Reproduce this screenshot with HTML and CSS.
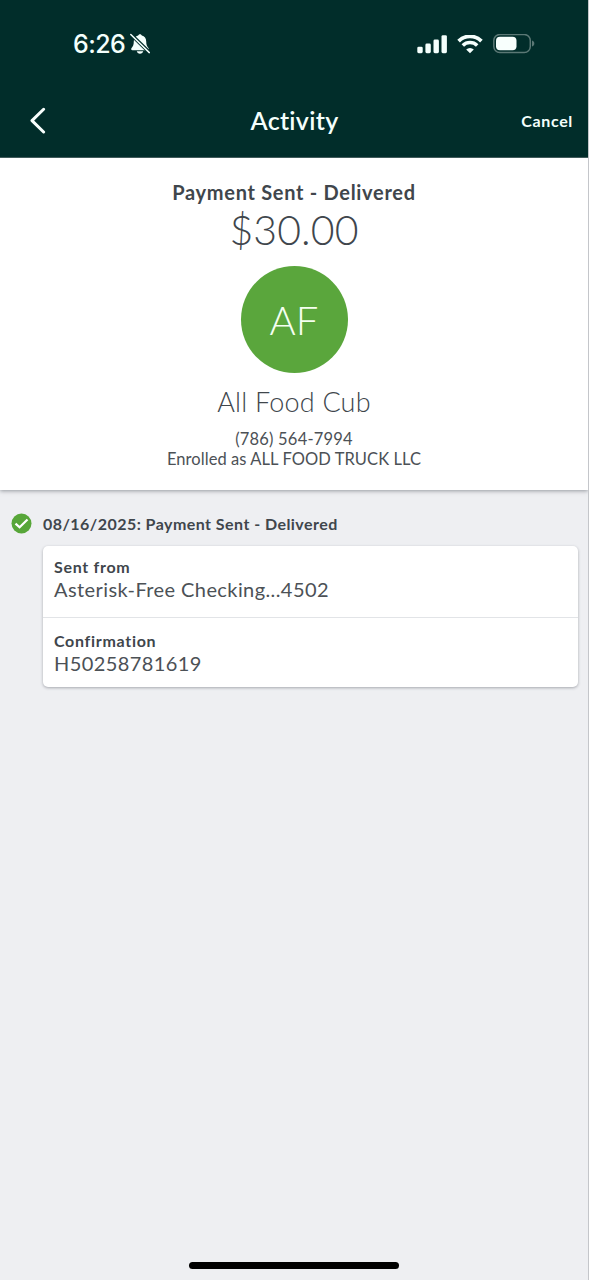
FILE: index.html
```html
<!DOCTYPE html>
<html lang="en">
<head>
<meta charset="utf-8">
<title>Activity</title>
<link rel="stylesheet" href="styles.css">
</head>
<body>
<div class="screen">
  <header class="header">
    <div class="status">
      <div class="status-left">
        <span class="time">6:26</span>
        <svg class="bell" width="22" height="22" viewBox="0 0 22 22">
          <path d="M11 1.200c.9 0 1.600.6 1.800 1.400 2.800.8 4.400 2.900 4.400 5.600 0 3.800.9 5.200 2.200 6.800.9 1 .4 2.300-.9 2.300H3.500c-1.300 0-1.800-1.300-.9-2.300C3.900 13.400 4.800 12 4.800 8.200c0-2.700 1.600-4.800 4.400-5.600.2-.8.9-1.400 1.800-1.400z" fill="#f4fffc"/>
          <path d="M7.800 18.300h6.400c-.3 1.500-1.600 2.500-3.200 2.500s-2.900-1-3.200-2.500z" fill="#f4fffc"/>
          <path d="M2 1.500L20.500 19.500" stroke="#012d2a" stroke-width="3.800"/>
          <path d="M1.800 1.500L20.300 19.600" stroke="#f4fffc" stroke-width="1.500" stroke-linecap="round"/>
        </svg>
      </div>
      <div class="status-right">
        <svg width="30" height="19" viewBox="0 0 30 19" fill="#f4fffc">
          <rect x="0.300" y="11.700" width="5.400" height="6.500" rx="1.400"/>
          <rect x="8.400" y="8.500" width="5.400" height="9.700" rx="1.400"/>
          <rect x="16.500" y="4.500" width="5.400" height="13.700" rx="1.400"/>
          <rect x="24.500" y="0.200" width="5.400" height="18" rx="1.400"/>
        </svg>
        <svg class="wifi" width="26" height="19" viewBox="0 0 26 19" fill="none" stroke="#f4fffc">
          <path d="M1.600 6.100A16 16 0 0 1 24.400 6.100" stroke-width="3.700"/>
          <path d="M5.800 10.600A10.200 10.200 0 0 1 20.200 10.600" stroke-width="3.500"/>
          <path d="M13 18.300L9.200 14.500A5.300 5.300 0 0 1 16.800 14.500Z" fill="#f4fffc" stroke="none"/>
        </svg>
        <svg class="battery" width="42" height="20" viewBox="0 0 42 20">
          <rect x=".8" y=".5" width="36.500" height="18" rx="6" fill="none" stroke="#5b7875" stroke-width="1.500"/>
          <rect x="3" y="2.700" width="20.500" height="13.600" rx="4" fill="#f8fffd"/>
          <path d="M39 6.500c1.700.6 2.300 1.700 2.300 3s-.6 2.400-2.300 3z" fill="#5b7875"/>
        </svg>
      </div>
    </div>
    <nav class="nav">
      <svg class="back" width="16" height="27" viewBox="0 0 16 27" fill="none" stroke="#f8fffd" stroke-width="3" stroke-linecap="round" stroke-linejoin="round">
        <path d="M13.600 2.300L2 13.600L13.600 25"/>
      </svg>
      <h1 class="title">Activity</h1>
      <span class="cancel">Cancel</span>
    </nav>
  </header>
  <section class="summary">
    <div class="state">Payment Sent - Delivered</div>
    <div class="amount">$30.00</div>
    <div class="avatar"><span>AF</span></div>
    <div class="payee">All Food Cub</div>
    <div class="phone">(786) 564-7994</div>
    <div class="enrolled">Enrolled as ALL FOOD TRUCK LLC</div>
  </section>
  <main class="history">
    <div class="event">
      <svg width="21" height="21" viewBox="0 0 21 21">
        <circle cx="10.500" cy="10.500" r="10" fill="#57a639"/>
        <path d="M4.500 10.600L8.600 14.300L16.500 6.500" fill="none" stroke="#fff" stroke-width="2.200"/>
      </svg>
      <span class="event-title">08/16/2025: Payment Sent - Delivered</span>
    </div>
    <div class="card">
      <div class="row">
        <div class="label">Sent from</div>
        <div class="value">Asterisk-Free Checking...4502</div>
      </div>
      <div class="row">
        <div class="label">Confirmation</div>
        <div class="value">H50258781619</div>
      </div>
    </div>
  </main>
  <div class="home"></div>
</div>
</body>
</html>
```
FILE: styles.css
```css
* { box-sizing: border-box; }
body {
  margin: 0;
  font-family: Lato, "Open Sans", sans-serif;
  color: #40464c;
}
.screen {
  width: 589px;
  height: 1280px;
  background: #eeeff2;
  border-right: 1px solid #c4c6ca;
  display: flex;
  flex-direction: column;
  overflow: hidden;
}
.header {
  height: 158px;
  flex: none;
  margin-right: -1px;
  background: #012d2a;
  border-bottom: 1px solid #43605e;
  color: #f4fffc;
}
.status {
  height: 86px;
  padding: 2px 54px 0 73px;
  display: flex;
  justify-content: space-between;
  align-items: center;
}
.status-left, .status-right { display: flex; align-items: center; }
.status-left { gap: 4px; }
.time { font: 500 25px/30px Inter, sans-serif; letter-spacing: -0.6px; }
.wifi { margin-left: 10px; }
.battery { margin-left: 10px; }
.nav {
  height: 68px;
  padding: 0 16px 0 16px;
  display: grid;
  grid-template-columns: 1fr auto 1fr;
  align-items: center;
}
.back { margin-left: 14px; }
.title { margin: 0; font-size: 25px; line-height: 30px; font-weight: 600; letter-spacing: 0.3px; }
.cancel { justify-self: end; font-size: 16px; font-weight: 700; letter-spacing: 0.65px; }
.summary {
  height: 332px;
  flex: none;
  padding-top: 21px;
  background: #fff;
  display: flex;
  flex-direction: column;
  align-items: center;
  box-shadow: 0 1px 4px rgba(60, 65, 75, 0.5);
  white-space: nowrap;
}
.state { font-size: 20px; line-height: 26px; font-weight: 700; letter-spacing: 0.7px; }
.amount { font-size: 41px; line-height: 50px; font-weight: 300; letter-spacing: 0.1px; }
.avatar {
  width: 107px;
  height: 107px;
  margin-top: 11px;
  border-radius: 50%;
  background: #5aa63c;
  color: #f5fff0;
  display: flex;
  align-items: center;
  justify-content: center;
  font-size: 40px;
  font-weight: 300;
}
.payee { margin-top: 12px; font-size: 27px; line-height: 34px; font-weight: 300; letter-spacing: 0.2px; }
.phone { margin-top: 10px; font-size: 16.5px; line-height: 20px; letter-spacing: 0.2px; }
.enrolled { font-size: 16.5px; line-height: 20px; letter-spacing: 0.07px; }
.phone, .enrolled, .value { color: #4c5156; }
.history { padding: 20px 10px 0 11px; flex: 1; }
.event { display: flex; align-items: center; gap: 11px; height: 26px; }
.event-title { font-size: 16px; font-weight: 700; letter-spacing: 0.45px; }
.card {
  margin: 10px 0 0 32px;
  height: 141px;
  background: #fff;
  border-radius: 5px;
  box-shadow: 0 1px 3px rgba(60, 65, 75, 0.4);
}
.row { height: 71px; padding: 11px 11px 0; }
.row + .row { height: 70px; border-top: 1px solid #e2e4e7; padding-top: 13px; }
.label { font-size: 16px; line-height: 20px; font-weight: 700; letter-spacing: 0.7px; }
.value { font-size: 20px; line-height: 25px; letter-spacing: 0.41px; }
.home { width: 210px; height: 7px; margin: 0 auto 11px; border-radius: 4px; background: #000; flex: none; }
```
